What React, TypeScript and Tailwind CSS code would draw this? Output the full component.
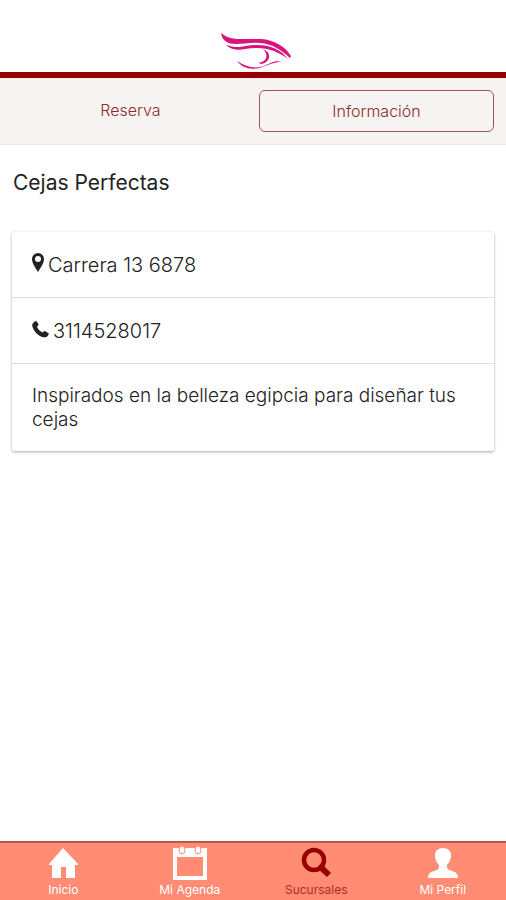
import { useState } from "react";
import type { ReactNode } from "react";

const TABS = ["Inicio", "Mi Agenda", "Sucursales", "Mi Perfil"] as const;
type Tab = (typeof TABS)[number];

const ICONS: Record<Tab, ReactNode> = {
  Inicio: <path d="M17 1 32 17v1h-3v13h-9V20h-5v11H6V18H3v-1Z" />,
  "Mi Agenda": (
    <>
      <path fillRule="evenodd" d="M0 1h34v32H0ZM4 10v19h26V10Z" />
      <ellipse cx="9" cy="3" rx="3" ry="4" stroke="#ff8c73" strokeWidth="1" />
      <ellipse cx="25" cy="3" rx="3" ry="4" stroke="#ff8c73" strokeWidth="1" />
    </>
  ),
  Sucursales: (
    <>
      <circle cx="15" cy="13" r="10" fill="none" stroke="currentColor" strokeWidth="4.5" />
      <path d="m22 16 10 10-4 4-10-9Z" />
    </>
  ),
  "Mi Perfil": (
    <path d="M17 1c5 0 8 3 8 7 0 4-1 7-4 10v2c0 2 2 3 5 4 4 1 6 3 6 7H2c0-4 2-6 6-7 3-1 5-2 5-4v-2c-3-3-4-6-4-10 0-4 3-7 8-7Z" />
  ),
};

function Logo() {
  return (
    <svg viewBox="0 0 72 38" className="h-[38px] w-[72px] text-[#d9147c]" fill="currentColor" role="img" aria-label="Cejas Perfectas">
      <path d="M1 1c5 4 9 5 15 6h25c13 1 24 7 30 17l-1 2C61 18 53 12 40 11c-9-1-16 1-24 1C8 12 2 9 1 1Z" />
      <path d="M6 13c7 2 12 3 19 1 20-3 34 1 43 13-11-8-23-13-43-10-8 2-15 0-19-4Z" />
      <path d="M43 17c9 4 8 12-1 15l-4-1c9-1 11-8 5-14Z" />
      <path d="M17 29c9 6 18 8 27 5 7-3 11-6 18-4-7 0-11 2-17 4-12 5-22 3-28-5Z" />
    </svg>
  );
}

function PinIcon() {
  return (
    <svg viewBox="0 0 12 20" className="-mt-1 h-5 w-3 shrink-0" fill="currentColor" aria-hidden="true">
      <path fillRule="evenodd" d="M6 0a6 6 0 0 1 6 6c0 4-3 8-6 13C3 14 0 10 0 6a6 6 0 0 1 6-6Zm0 3a3 3 0 1 0 0 6 3 3 0 0 0 0-6Z" />
    </svg>
  );
}

function PhoneIcon() {
  return (
    <svg viewBox="0 0 17 17" className="-mt-1 h-[17px] w-[17px] shrink-0" fill="currentColor" aria-hidden="true">
      <path d="M3.4.3c.5-.4 1-.3 1.4.3l1.500 2.500c.3.6.3 1-.2 1.500L5 5.700c.8 2.500 3 4.700 5.800 5.800l1-1c.5-.5 1-.5 1.600-.2l2.800 1.600c.7.4.8.9.4 1.500-1.100 2.200-3 3.300-5.200 2.800C6.200 15.200 1.200 9.500.2 4.700-.1 2.900 1.500 1.200 3.400.3Z" />
    </svg>
  );
}

export default function App() {
  const [vista, setVista] = useState<"reserva" | "informacion">("informacion");
  const [activo, setActivo] = useState<Tab>("Sucursales");

  return (
    <div className="flex min-h-screen flex-col bg-white font-['Inter','Liberation_Sans',sans-serif] text-[#222]">
      <header className="flex h-[78px] items-end justify-center border-b-6 border-[#960000] pb-0.5 pl-1.5">
        <Logo />
      </header>

      <div className="grid grid-cols-2 border-b border-[#e8e8e8] bg-[#f5f4f2] px-3 py-3 text-base font-light text-[#8f2a2a]">
        <button
          type="button"
          onClick={() => setVista("reserva")}
          className={`h-[42px] rounded-md border pr-1 pb-0.5 ${vista === "reserva" ? "border-[#aa5055]" : "border-transparent"}`}
        >
          Reserva
        </button>
        <button
          type="button"
          onClick={() => setVista("informacion")}
          className={`ml-1.5 h-[42px] rounded-md border ${vista === "informacion" ? "border-[#aa5055]" : "border-transparent"}`}
        >
          Información
        </button>
      </div>

      <main className="flex-1 px-3">
        <h1 className="mt-6 px-px text-[21px] leading-7">Cejas Perfectas</h1>
        <ul className="mt-[35px] divide-y divide-[#dedede] rounded-xs text-[19px] leading-6 font-light shadow-[0_1px_3px_rgba(0,0,0,0.35)]">
          <li className="flex items-center gap-1 px-5 pt-[21px] pb-5 text-xl leading-6">
            <PinIcon />
            Carrera 13 6878
          </li>
          <li className="flex items-center gap-1 px-5 pt-[21px] pb-5 text-xl leading-6">
            <PhoneIcon />
            3114528017
          </li>
          <li className="px-5 pt-5 pb-[19px]">Inspirados en la belleza egipcia para diseñar tus cejas</li>
        </ul>
      </main>

      <nav className="grid h-[59px] grid-cols-4 border-t-2 border-[#b45a4b] bg-[#ff8c73]">
        {TABS.map((tab) => (
          <button
            key={tab}
            type="button"
            onClick={() => setActivo(tab)}
            aria-current={tab === activo ? "page" : undefined}
            className={`flex flex-col items-center gap-px pt-1 text-xs leading-4 ${tab === activo ? "text-[#960000]" : "text-white"}`}
          >
            <svg viewBox="0 0 34 34" className="h-[34px] w-[34px] shrink-0 overflow-visible" fill="currentColor" aria-hidden="true">
              {ICONS[tab]}
            </svg>
            <span className={tab === activo ? "opacity-70" : ""}>{tab}</span>
          </button>
        ))}
      </nav>
    </div>
  );
}
